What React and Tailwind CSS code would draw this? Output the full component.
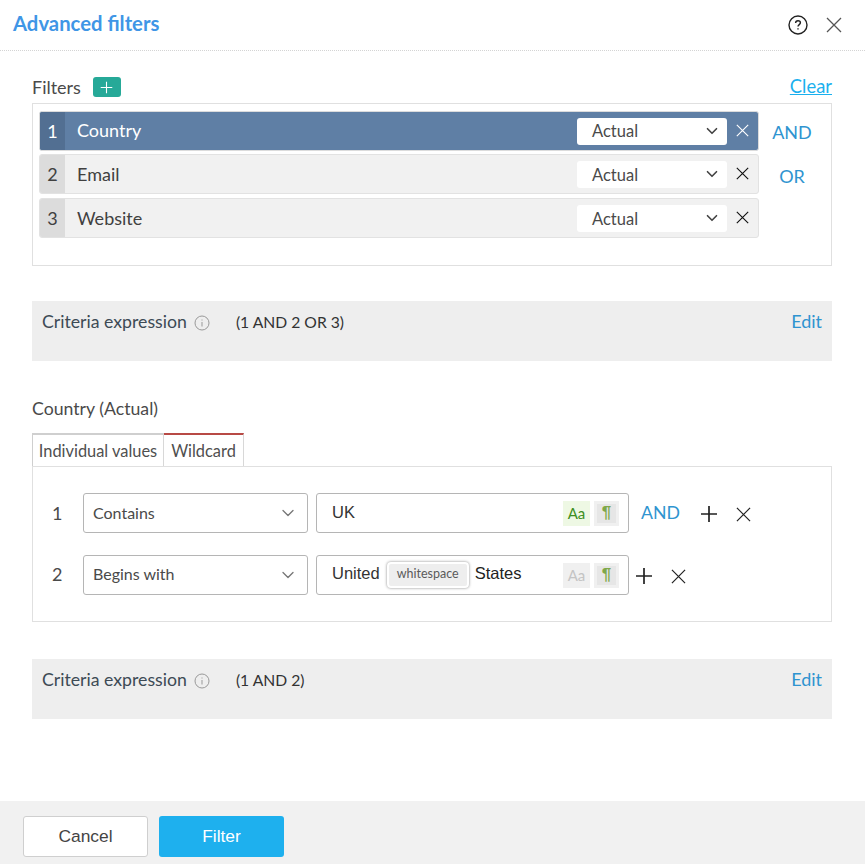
import React from "react";
import { ChevronDown } from "lucide-react";

const CloseIcon = ({ size = 16, color = "#222", width = 1.3 }) => (
  <svg width={size} height={size} viewBox="0 0 16 16" fill="none" stroke={color} strokeWidth={width}>
    <path d="M1 1L15 15M15 1L1 15" />
  </svg>
);

const PlusIcon = ({ size = 18, color = "#222", width = 1.6 }) => (
  <svg width={size} height={size} viewBox="0 0 18 18" fill="none" stroke={color} strokeWidth={width}>
    <path d="M9 1V17M1 9H17" />
  </svg>
);

const InfoIcon = () => (
  <svg width="16" height="16" viewBox="0 0 16 16" fill="none" stroke="#999" strokeWidth="1">
    <circle cx="8" cy="8" r="7" />
    <path d="M8 7V11.5M8 4.5V5.5" />
  </svg>
);

const HelpIcon = () => (
  <svg width="20" height="20" viewBox="0 0 20 20" fill="none" stroke="#222" strokeWidth="1.4">
    <circle cx="10" cy="10" r="9" />
    <path d="M7.6 8C7.6 6.6 8.7 5.7 10 5.7C11.4 5.7 12.4 6.6 12.4 7.8C12.4 9.6 10 9.6 10 11.6" />
    <path d="M10 13.2V14.6" />
  </svg>
);

const FilterRow = ({ num, name, active, className = "" }) => (
  <div
    className={`flex items-center h-10 rounded-[3px] border overflow-hidden ${className} ${
      active ? "bg-[#5f7fa5] border-[#dcdcdc] text-white" : "bg-[#f1f1f1] border-[#e2e2e2] text-[#404040]"
    }`}
  >
    <div
      className={`w-[25px] h-full flex items-center justify-center text-[18px] ${
        active ? "bg-[#526f92]" : "bg-[#dcdcdc]"
      }`}
    >
      {num}
    </div>
    <div className={`flex-1 pl-3 text-[18px] ${active ? "pb-[1px]" : "pt-[1px]"}`}>{name}</div>
    <div className="w-[150px] h-[27px] bg-white rounded-[3px] flex items-center justify-between pl-[15px] pr-[6px] text-[16.5px] text-[#4a4a4a]">
      <span className={active ? "pt-[1px]" : "pt-[3px]"}>Actual</span>
      <ChevronDown size={18} strokeWidth={2.2} color="#444" />
    </div>
    <div className="w-[31px] flex items-center justify-center pb-[2px]">
      <CloseIcon size={13} color={active ? "#ffffff" : "#111111"} width={1.4} />
    </div>
  </div>
);

const Criteria = ({ expr }) => (
  <div className="h-[60px] bg-[#eeeeee] pl-[10px] pr-[10px] pt-[10px] flex items-start">
    <span className="text-[17.7px] leading-[22px] text-[#3d4a55]">Criteria expression</span>
    <span className="ml-[7px] mt-[4px]"><InfoIcon /></span>
    <span className="ml-[26px] text-[15.7px] leading-[22px] text-[#333]">{expr}</span>
    <span className="ml-auto text-[18px] leading-[20px] text-[#2f94d0]">Edit</span>
  </div>
);

const MatchSelect = ({ label, textClass = "pb-[1px]" }) => (
  <div className="w-[225px] h-10 border border-[#b5b5b5] rounded-[3px] flex items-center justify-between pl-[9px] pr-[9px] text-[16px] text-[#4a4a4a]">
    <span className={textClass}>{label}</span>
    <ChevronDown size={20} strokeWidth={1.6} color="#777" />
  </div>
);

const CaseToggle = ({ on }) => (
  <div
    className={`ml-auto w-[27px] h-[25px] flex items-center justify-center font-['Lato',sans-serif] text-[15px] ${
      on ? "bg-[#eef8e4] text-[#3f8f22]" : "bg-[#f0f0f0] text-[#c4c4c4]"
    }`}
  >
    Aa
  </div>
);

const PilcrowToggle = () => (
  <div className="ml-[4px] w-[25px] h-[25px] bg-[#f0f0f0] flex items-center justify-center">
    <span className="w-[19px] h-[19px] bg-[#e6e6e6] flex items-center justify-center text-[17px] font-bold text-[#7fa84a]">¶</span>
  </div>
);

export default function App() {
  return (
    <div className="w-[865px] h-[864px] bg-white flex flex-col font-['Lato',sans-serif] overflow-hidden">
      {/* header */}
      <div className="h-[51px] shrink-0 border-b border-dotted border-[#d4d4d4] flex items-center pl-[13px] pr-[23px]">
        <h1 className="text-[20.3px] font-bold text-[#3f96e6] pb-[4px]">Advanced filters</h1>
        <div className="ml-auto flex items-center gap-[18px]">
          <HelpIcon />
          <CloseIcon size={16} color="#555" width={1.3} />
        </div>
      </div>

      <div className="flex-1 pl-[32px] pr-[33px]">
        {/* filters */}
        <div className="flex items-center justify-between h-[24px] mt-[24px]">
          <div className="flex items-center gap-[12px]">
            <span className="text-[18px] text-[#4a4a4a]">Filters</span>
            <span className="w-[28px] h-[20px] rounded-[3px] bg-[#26a998] flex items-center justify-center">
              <PlusIcon size={13} color="#fff" width={1.5} />
            </span>
          </div>
          <a className="text-[18.4px] text-[#1ab0ee] underline">Clear</a>
        </div>
        <div className="mt-[4px] h-[163px] border border-[#e0e0e0] pt-[7px] pl-[6px] flex">
          <div className="w-[720px] flex flex-col gap-[3px]">
            <FilterRow num="1" name="Country" active />
            <FilterRow num="2" name="Email" />
            <FilterRow num="3" name="Website" className="mt-[1px]" />
          </div>
          <div className="w-[66px] flex flex-col items-center text-[18px] text-[#2f94d0]">
            <span className="h-[44px] leading-[42px]">AND</span>
            <span className="h-[44px] leading-[42px]">OR</span>
          </div>
        </div>

        <div className="mt-[35px]">
          <Criteria expr="(1 AND 2 OR 3)" />
        </div>

        {/* value conditions */}
        <div className="mt-[37px] text-[17.7px] leading-[22px] text-[#4a4a4a]">Country (Actual)</div>
        <div className="mt-[13px] flex h-[33px] text-[16.4px] text-[#4f4f4f]">
          <div className="w-[132px] pt-[1px] border-l border-r border-t-2 border-[#cfcfcf] border-r-[#d8d8d8] flex items-center justify-center">
            Individual values
          </div>
          <div className="w-[80px] pt-[1px] border-r border-t-2 border-t-[#b84a45] border-r-[#d8d8d8] flex items-center justify-center">
            Wildcard
          </div>
        </div>
        <div className="h-[156px] border border-[#e0e0e0] pt-[26px] pl-[19px] flex flex-col gap-[22px]">
          <div className="flex items-center">
            <span className="w-[31px] text-[18px] text-[#4a4a4a]">1</span>
            <MatchSelect label="Contains" />
            <div className="ml-[8px] w-[313px] h-10 border border-[#b5b5b5] rounded-[3px] flex items-center pl-[15px] pr-[9px] font-['Liberation_Sans',sans-serif] text-[16.5px] text-[#333]">
              <span className="pb-[2px]">UK</span>
              <CaseToggle on />
              <PilcrowToggle />
            </div>
            <span className="ml-[12px] text-[17.7px] text-[#2f94d0]">AND</span>
            <span className="ml-[20px] pt-[2px]"><PlusIcon size={18} color="#222" width={1.7} /></span>
            <span className="ml-[18px] pt-[2px]"><CloseIcon size={15} color="#222" width={1.3} /></span>
          </div>
          <div className="flex items-center">
            <span className="w-[31px] pb-[2px] text-[18px] text-[#4a4a4a]">2</span>
            <MatchSelect label="Begins with" textClass="pb-[3px]" />
            <div className="ml-[8px] w-[313px] h-10 border border-[#b5b5b5] rounded-[3px] flex items-center pl-[15px] pr-[9px] font-['Liberation_Sans',sans-serif] text-[16.5px] text-[#333]">
              <span className="pb-[3px]">United</span>
              <span className="ml-[7px] h-[26px] w-[82px] mb-[1px] rounded-[4px] border-2 border-white bg-[#eeeeee] shadow-[0_0_3px_#888] flex items-center justify-center font-['Lato',sans-serif] text-[12.5px] text-[#5a5a5a]">
                whitespace
              </span>
              <span className="ml-[6px] pb-[3px] text-[#222]">States</span>
              <CaseToggle />
              <PilcrowToggle />
            </div>
            <span className="ml-[6px] pt-[2px]"><PlusIcon size={18} color="#222" width={1.7} /></span>
            <span className="ml-[18px] pt-[2px]"><CloseIcon size={15} color="#222" width={1.3} /></span>
          </div>
        </div>

        <div className="mt-[37px]">
          <Criteria expr="(1 AND 2)" />
        </div>
      </div>

      {/* footer */}
      <div className="h-[63px] shrink-0 bg-[#f1f1f1] pl-[23px] pt-[15px] flex items-start gap-[11px] font-['Liberation_Sans',sans-serif] text-[17.4px]">
        <button className="w-[125px] h-[41px] bg-white border border-[#cfcfcf] rounded-[3px] text-[#444]">Cancel</button>
        <button className="w-[125px] h-[41px] bg-[#1eb0ee] rounded-[3px] text-white">Filter</button>
      </div>
    </div>
  );
}
